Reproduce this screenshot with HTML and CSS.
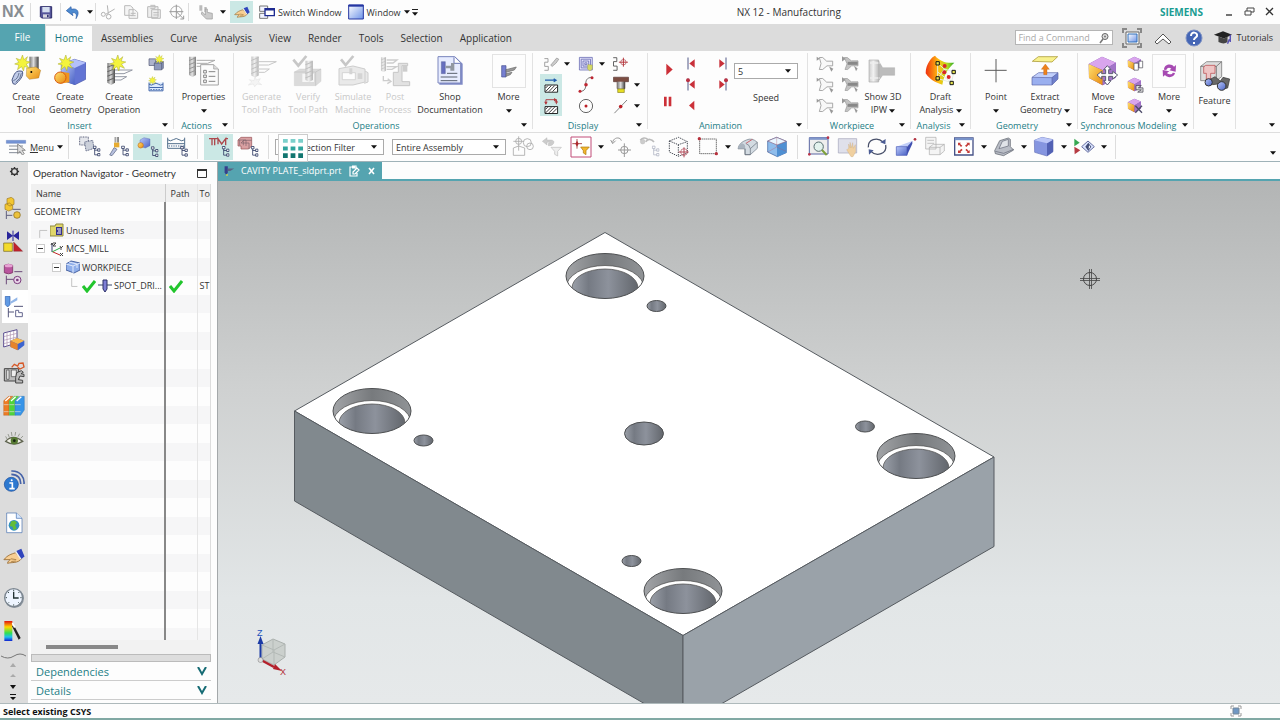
FILE: index.html
```html
<!DOCTYPE html>
<html lang="en">
<head>
<meta charset="utf-8">
<meta name="viewport" content="width=device-width, initial-scale=1">
<title>NX 12 - Manufacturing</title>
<link rel="stylesheet" href="styles.css">
</head>
<body>
<svg class="sprite" aria-hidden="true">
  <defs>
    <linearGradient id="gSteel"><stop offset="0" stop-color="#777"/><stop offset=".45" stop-color="#ddd"/><stop offset="1" stop-color="#444"/></linearGradient>
    <linearGradient id="gBlue" x2="1" y2="1"><stop offset="0" stop-color="#b9c8fb"/><stop offset="1" stop-color="#4a62c4"/></linearGradient>
    <linearGradient id="gGold" x2="1" y2="1"><stop offset="0" stop-color="#ffe070"/><stop offset="1" stop-color="#e88a10"/></linearGradient>
    <linearGradient id="gSky" x2="1" y2="1"><stop offset="0" stop-color="#fff"/><stop offset="1" stop-color="#6d93e8"/></linearGradient>
    <linearGradient id="gHeat" x2="1" y2="0"><stop offset="0" stop-color="#f03010"/><stop offset=".45" stop-color="#ffc010"/><stop offset=".75" stop-color="#b5dc20"/><stop offset="1" stop-color="#28a828"/></linearGradient>
    <linearGradient id="gSpectrum" x2="0" y2="1"><stop offset="0" stop-color="#e01010"/><stop offset=".3" stop-color="#ffd800"/><stop offset=".6" stop-color="#30e050"/><stop offset=".8" stop-color="#20c0f0"/><stop offset="1" stop-color="#1020d0"/></linearGradient>
    <linearGradient id="gHole"><stop offset="0" stop-color="#9ba0a9"/><stop offset=".25" stop-color="#757a83"/><stop offset=".55" stop-color="#8d929c"/><stop offset="1" stop-color="#62666c"/></linearGradient>
    <linearGradient id="gRim"><stop offset="0" stop-color="#a2a4a7"/><stop offset=".5" stop-color="#777a7d"/><stop offset="1" stop-color="#909396"/></linearGradient>
    <clipPath id="holeClip"><ellipse rx="39" ry="22.5"/></clipPath>
  </defs>
  <symbol id="star" viewBox="0 0 48 48"><path d="M24 0l4 14 11-9-5 13 14 3-13 6 9 13-14-6-3 14-6-13-12 9 4-14-13-3 13-5-8-12 13 5z" fill="#f4f43c" stroke="#a8aa30" stroke-width="1.5"/></symbol>
  <symbol id="drill" viewBox="0 0 24 66"><path d="M1 2h22v57l-11 6-11-6z" fill="url(#gSteel)"/><path d="M1 14l22-9M1 27l22-9M1 40l22-9M1 53l22-9" stroke="#666" stroke-width="3"/></symbol>
  <symbol id="caret" viewBox="0 0 7 4"><path d="M0 0h7L3.500 4z" fill="#111"/></symbol>
  <symbol id="tree" viewBox="0 0 24 33"><g fill="#fff" stroke="#333f66" stroke-width="2.500"><path d="M6 8v20h12M6 14h12" fill="none"/><path d="M2 2h8v7H2zM15 10h7v7h-7zM15 24h7v7h-7z"/></g></symbol>

  <symbol id="i-tool" viewBox="0 0 96 96"><path d="M58 5h28v48H58z" fill="url(#gSteel)"/><path d="M50 39l28-3 14 10-6 23-28 4-9-10z" fill="url(#gGold)" stroke="#92600c"/><circle cx="64" cy="51" r="3"/><path d="M6 75c7-18 10-31 31-26 5 13-8 28-21 39l-7-2z" fill="#c0cbe9" stroke="#4c5a86" stroke-width="3"/><path d="M10 77q14-5 17-23M17 82q16-11 17-27" fill="none" stroke="#697895" stroke-width="3"/><use href="#star" x="13" y="0" width="49" height="48"/></symbol>
  <symbol id="i-geom" viewBox="0 0 96 96"><path d="M22 28l39-15 35 10-1 50-32 16-41-14z" fill="#6274d4" stroke="#4552a8" stroke-width="2"/><path d="M22 28l40 11 34-16-35-10z" fill="#b3c0fa"/><path d="M22 28l40 11v50l-40-14z" fill="url(#gBlue)"/><path d="M20 50l26 4v28l-28 4z" fill="#ef951e"/><circle cx="19" cy="68" r="17" fill="url(#gGold)" stroke="#d85c14" stroke-width="3"/><use href="#star" x="11" y="0" width="49" height="48"/></symbol>
  <symbol id="i-oper" viewBox="0 0 96 96"><path d="M34 45h54l-25 11H36M34 65h37l-17 10H34" fill="none" stroke="#9498a4" stroke-width="3"/><use href="#drill" x="12" y="22" width="25" height="69"/><use href="#star" x="20" y="0" width="49" height="48"/></symbol>
  <symbol id="i-smallgeom" viewBox="0 0 60 60"><path d="M9 16h20v20H9z" fill="#aeb4cc" stroke="#4e5674" stroke-width="2"/><path d="M25 29l5-5h22v20l-5 5H25z" fill="#8e99bc" stroke="#4e5674" stroke-width="2"/><path d="M25 29h22v20M47 29l5-5" fill="none" stroke="#4e5674" stroke-width="2"/><use href="#star" x="26" y="3" width="28" height="28"/></symbol>
  <symbol id="i-method" viewBox="0 0 60 60"><path d="M9 24v25h42V24M9 29q7 6 14 0t14 0 14 0M10 39h41" fill="#dceafc" stroke="#4468ac" stroke-width="3"/><path d="M13 45h36" stroke="#6482ba" stroke-width="3" stroke-dasharray="5 3"/><use href="#star" x="7" y="5" width="25" height="25"/></symbol>
  <symbol id="i-props" viewBox="0 0 96 96"><use href="#drill" x="2" y="2" width="23" height="66" opacity=".7"/><path d="M26 16h55l-22 9H26M26 34h28l-12 7" fill="none" stroke="#aaa" stroke-width="3"/><path d="M38 29h39l14 13v48H38z" fill="#fbfbfb" stroke="#a3a3a3" stroke-width="3"/><path d="M77 29v13h14" fill="#ddd" stroke="#999" stroke-width="2"/><path d="M47 46h8v8h-8zM47 60h8v8h-8zM47 75h8v8h-8zM62 50h20M62 64h20M62 79h20" fill="none" stroke="#868686" stroke-width="3"/></symbol>
  <symbol id="i-generate" viewBox="0 0 96 96"><use href="#drill" x="15" y="2" width="24" height="67"/><path d="M39 20h52L68 30H39M39 42h31L56 52H39" fill="none" stroke="#777" stroke-width="3"/><path d="M27 63l4 12 12-4-6 10 10 8-14-2-7 8-4-8-15 3 10-9-7-7 14 3z" fill="#e8e8e8" stroke="#999"/></symbol>
  <symbol id="i-verify" viewBox="0 0 96 96"><path d="M7 51l16-9h64v37L71 92H7z" fill="#aaa" stroke="#777"/><path d="M7 51h64v41M71 51l16-9" fill="none" stroke="#666" stroke-width="2"/><path d="M31 56h35v25H31z" fill="#eee"/><use href="#drill" x="39" y="15" width="25" height="67"/><path d="M4 14l15 18L43 3" fill="none" stroke="#777" stroke-width="8"/></symbol>
  <symbol id="i-simulate" viewBox="0 0 96 96"><path d="M6 41l42-8 36 9v39l-36 9H6zM84 48l9 5v28l-11 4" fill="#ccc" stroke="#888" stroke-width="3"/><path d="M16 53h39v21H16z" fill="#fff" stroke="#777" stroke-width="2"/><path d="M37 40v18h9V40M62 55h14v17H62z" fill="#999"/><path d="M12 13l14 17L49 3" fill="none" stroke="#777" stroke-width="8"/></symbol>
  <symbol id="i-post" viewBox="0 0 96 96"><use href="#drill" x="5" y="2" width="17" height="53"/><path d="M23 15h31l-12 9H23M23 35h30l-14 8H23M13 63v14h18M26 71l10 8-11 7" fill="none" stroke="#888" stroke-width="4"/><path d="M43 52h15V25h28v7H69v48h23v12H43z" fill="#bbb" stroke="#777" stroke-width="3"/><path d="M71 32h14v18H71z" fill="#888"/></symbol>
  <symbol id="i-doc" viewBox="0 0 96 96"><path d="M16 5h48l22 21v63H16z" fill="#7f8ac6"/><path d="M12 5h50l18 18v61H12z" fill="#e7ecff" stroke="#7c86bd" stroke-width="3"/><path d="M60 7v18h19" fill="#fff" stroke="#6c77b3" stroke-width="3"/><path d="M22 20h12v36H22z" fill="#666ebf" stroke="#3e477d"/><path d="M35 32h16v-8h10v23H49v-7H35" fill="#9298a1"/><path d="M39 55h31M20 66h50M20 77h50" stroke="#59616e" stroke-width="3"/></symbol>
  <symbol id="i-moreop" viewBox="0 0 96 96"><path d="M26 32h13v34H26z" fill="#767fd1" stroke="#46508f" stroke-width="2"/><path d="M39 44l31-8-6 9-25 7zM39 56l18-4-5 7-13 5z" fill="#999" stroke="#666" stroke-width="2"/></symbol>
  <symbol id="i-show3d" viewBox="0 0 96 96"><path d="M6 15h29v66H6z" fill="url(#gSteel)" opacity=".35"/><path d="M35 18l12 20h36v23H47L35 77z" fill="#bcbcbc" stroke="#999"/><path d="M9 24h29M9 69h29" stroke="#eee" stroke-width="4"/><path d="M6 15h29v66H6z" fill="none" stroke="#b0b0b0" stroke-width="2"/></symbol>
  <symbol id="i-draft" viewBox="0 0 96 96"><path d="M2 55C2 27 21 5 30 2c14 16 34 24 58 21-15 15-29 28-36 66C31 82 14 74 2 55z" fill="url(#gHeat)"/><path d="M38 25l20 17 29 9-8 31-41-11zM38 71L58 42 79 82 38 51" fill="none" stroke="#e7eedf" stroke-width="3"/><path d="M33 20h10v10H33zM33 65h10v10H33zM81 46h10v10H81zM75 79h10v10H75z" fill="#e9e650" stroke="#171717" stroke-width="3"/><g fill="#d8262b"><circle cx="59" cy="33" r="6"/><circle cx="58" cy="52" r="6"/><circle cx="71" cy="66" r="6"/></g></symbol>
  <symbol id="i-point" viewBox="0 0 96 96"><path d="M48 12v70M14 46h66" stroke="#5c5c5c" stroke-width="3"/></symbol>
  <symbol id="i-extract" viewBox="0 0 96 96"><path d="M10 19l18-14h58L69 21z" fill="#f8f18d" stroke="#9e8b19" stroke-width="2"/><path d="M9 67l20-14h58L69 68z" fill="#c1cffb"/><path d="M9 67h60v23H9z" fill="#9aafef"/><path d="M69 67l18-14v19L69 90z" fill="#6f80cc"/><path d="M9 67l20-14h58L69 68zM69 68v22M9 67v23h60l18-18V53" fill="none" stroke="#5a65a7" stroke-width="2"/><path d="M44 59V43h-7l12-16 12 16h-7v16z" fill="#ee821b" stroke="#b65d14"/></symbol>
  <symbol id="i-cube" viewBox="0 0 96 96"><path d="M5 27L45 5l42 18-1 45-39 23L6 69z" fill="#7b4ca9"/><path d="M5 27L45 5l42 18-39 23z" fill="#d9a5ed"/><path d="M5 27l42 19v45L6 69z" fill="url(#gGold)"/><path d="M48 46l39-23-1 45-39 23z" fill="#a274c8"/></symbol>
  <symbol id="i-move" viewBox="0 0 96 96"><use href="#i-cube" width="96" height="96"/><path d="M61 32l11 12h-7v12h12v-7l15 11-15 12v-8H65v13h7L61 90 50 77h6V64H44v8L30 60l14-11v7h12V44h-6z" fill="#fff" stroke="#5b5b72" stroke-width="3"/></symbol>
  <symbol id="i-syncmore" viewBox="0 0 96 96"><path d="M33 44c0-16 22-20 30-9l6-5-1 20-19-4 6-5c-7-6-14-2-15 4M66 54c-2 13-21 17-30 6l-6 5-1-20 20 4-7 5c8 7 16 4 17-1" fill="#a64ab2"/></symbol>
  <symbol id="i-feature" viewBox="0 0 96 96"><path d="M5 22L23 8h45v45L52 65H5z" fill="#ddd" stroke="#666" stroke-width="2"/><path d="M5 22h47v43M52 22L68 8" fill="none" stroke="#555" stroke-width="2"/><path d="M14 24l6-5h28v24H35v18H22V43h-8z" fill="#eec4c4" stroke="#b83f43" stroke-width="2"/><path d="M26 65l22-12 16 13 8-11 20 5-6 27-18 5-11-17-16 2z" fill="#686868" stroke="#333" stroke-width="2"/><circle cx="29" cy="70" r="11" fill="url(#gBlue)" stroke="#333" stroke-width="3"/><circle cx="68" cy="81" r="13" fill="url(#gBlue)" stroke="#333" stroke-width="3"/></symbol>

  <symbol id="d-path" viewBox="0 0 60 60"><path d="M8 12h12v12H9v14h12v13H8" fill="none" stroke="#999" stroke-width="3"/><path d="M29 34l10-12 10-12 7 4-9 13-13 11z" fill="#ccc" stroke="#888" stroke-width="2"/></symbol>
  <symbol id="d-boundary" viewBox="0 0 60 60"><path d="M8 8h43v42H8z" fill="#e1e0fa"/><path d="M8 8h43v42H8zM14 14h31v29H14zM20 20h19v17H20zM26 26h7v6h-7z" fill="none" stroke="#6266ae" stroke-width="2.500"/><path d="M36 32l15 1v14l-8 6-8-6z" fill="#d5da65" stroke="#878936"/></symbol>
  <symbol id="d-target" viewBox="0 0 60 60"><path d="M4 9h12v13H5v15h12v14H4" fill="none" stroke="#555" stroke-width="3"/><circle cx="38" cy="24" r="9" fill="none" stroke="#a02c35" stroke-width="2"/><path d="M38 9v30M23 24h30" stroke="#b22930" stroke-width="3"/></symbol>
  <symbol id="d-hatch1" viewBox="0 0 60 60"><path d="M10 14h36M39 9l8 5-8 5" fill="none" stroke="#205bad" stroke-width="4"/><path d="M10 30h42v24H10z" fill="#fff" stroke="#111" stroke-width="3"/><path d="M12 52l19-20M23 52l19-20M35 52l15-16M12 40l8-8" stroke="#222" stroke-width="3"/></symbol>
  <symbol id="d-hatch2" viewBox="0 0 60 60"><path d="M13 24V9h35v15" fill="none" stroke="#ab3036" stroke-width="3"/><path d="M40 3l10 6-10 6M7 16h12l-6 10M42 18h12l-6-9" fill="#b3383d"/><path d="M10 32h42v23H10z" fill="#fff" stroke="#111" stroke-width="3"/><path d="M12 53l19-19M23 53l19-19M35 53l15-15M12 41l7-7" stroke="#222" stroke-width="3"/></symbol>
  <symbol id="d-curve" viewBox="0 0 60 60"><path d="M8 52c41-3 1-45 43-48" fill="none" stroke="#666" stroke-width="3"/><g fill="#be2732"><circle cx="10" cy="51" r="5"/><circle cx="30" cy="29" r="6"/><circle cx="50" cy="6" r="5"/></g></symbol>
  <symbol id="d-holder" viewBox="0 0 60 60"><path d="M5 4h50v15H43v23H17V19H5z" fill="#7c4d42" stroke="#522f2b" stroke-width="2"/><path d="M17 19h26v24H17z" fill="url(#gSteel)"/><path d="M19 43h22v12H19z" fill="#e6de22" stroke="#7e7717" stroke-width="2"/></symbol>
  <symbol id="d-circle" viewBox="0 0 60 60"><circle cx="30" cy="30" r="22" fill="none" stroke="#555" stroke-width="3"/><circle cx="30" cy="30" r="5" fill="#bb2027"/></symbol>
  <symbol id="d-line" viewBox="0 0 60 60"><path d="M8 54L50 10" stroke="#777" stroke-width="3"/><circle cx="29" cy="32" r="6" fill="#bb2027"/></symbol>
  <symbol id="a-play" viewBox="0 0 60 60"><path d="M22 13l19 17-19 17z" fill="#cc3038"/></symbol>
  <symbol id="a-pause" viewBox="0 0 60 60"><path d="M15 16h8v28h-8zM29 16h8v28h-8z" fill="#cc3038"/></symbol>
  <symbol id="a-back" viewBox="0 0 60 60"><path d="M37 16v28L21 30z" fill="#cc3038"/></symbol>
  <symbol id="a-first" viewBox="0 0 60 60"><path d="M38 17v26L22 30z" fill="#c8303a"/><path d="M18 12v36" stroke="#515887" stroke-width="3"/></symbol>
  <symbol id="a-firstdot" viewBox="0 0 60 60"><use href="#a-first" width="60" height="60"/><circle cx="18" cy="17" r="6" fill="#b93244"/></symbol>
  <symbol id="w-part" viewBox="0 0 60 60"><path d="M5 10l9 6-9 6z" fill="#999"/><path d="M13 12h10l12 11h18v14H36L23 48H13l5-18z" fill="#f8f8f8" stroke="#999" stroke-width="2.500"/><path d="M42 39l13 7-6 9z" fill="#999"/></symbol>
  <symbol id="w-solid" viewBox="0 0 60 60"><path d="M6 8l12 8-12 8z" fill="#999"/><path d="M13 12h9l12 10h20v15H35L23 48h-8l6-17z" fill="#c3c3c3" stroke="#999" stroke-width="2"/><path d="M23 25h30v9H23z" fill="#888"/><path d="M42 37l11 8-5 8z" fill="#999"/></symbol>
  <symbol id="s-copy" viewBox="0 0 60 60"><use href="#i-cube" x="6" y="6" width="46" height="48"/><path d="M27 29h13v21H27zM42 23h11v20H42z" fill="#fff" stroke="#494951" stroke-width="2"/></symbol>
  <symbol id="s-size" viewBox="0 0 60 60"><use href="#i-cube" x="6" y="6" width="46" height="48"/><path d="M33 33h16l-9 7h14v13H38l11-7H33z" fill="#ddd" stroke="#3b3b47" stroke-width="2"/></symbol>
  <symbol id="s-delete" viewBox="0 0 60 60"><use href="#i-cube" x="6" y="6" width="46" height="48"/><path d="M31 31l20 21M51 31L31 52" stroke="#4d4b69" stroke-width="4"/></symbol>

  <symbol id="q-save" viewBox="0 0 48 48"><path d="M7 8h34v34H11l-4-4z" fill="#55559a" stroke="#2e2d6a" stroke-width="3"/><path d="M13 9h22v16H13z" fill="#d5deef"/><path d="M15 31h19v10H15z" fill="#d7d7df"/><path d="M27 32h5v8h-5z" fill="#313174"/></symbol>
  <symbol id="q-undo" viewBox="0 0 48 48"><path d="M4 20L18 8l1 8c17-5 28 7 14 28 4-16-3-20-12-17l3 8z" fill="#4d8ad0" stroke="#2557a4" stroke-width="2"/></symbol>
  <symbol id="q-cut" viewBox="0 0 48 48"><g fill="none" stroke="#b3b3b3" stroke-width="3"><path d="M22 4l3 25M44 15L17 31"/><circle cx="10" cy="31" r="6"/><circle cx="26" cy="38" r="7"/></g></symbol>
  <symbol id="q-copy" viewBox="0 0 48 48"><g fill="#f5f5f5" stroke="#bbb" stroke-width="3"><path d="M5 5h17l8 7v22H5zM18 17h17l9 8v18H18z"/><path d="M23 28h15M23 35h15"/></g></symbol>
  <symbol id="q-paste" viewBox="0 0 48 48"><path d="M5 8h31v32H5zM17 17h26v26H17z" fill="#eee" stroke="#bbb" stroke-width="3"/><path d="M13 4h14v9H13M22 26h16M22 33h16" fill="none" stroke="#bbb" stroke-width="3"/></symbol>
  <symbol id="q-orient" viewBox="0 0 48 48"><circle cx="22" cy="23" r="17" fill="none" stroke="#aaa" stroke-width="3"/><path d="M22 2v43M1 23h42M22 23l22 22M44 35v10H34" fill="none" stroke="#999" stroke-width="3"/></symbol>
  <symbol id="q-touch" viewBox="0 0 48 48"><path d="M4 4h9v16H4zM19 9h7v15h-7z" fill="#bbb"/><path d="M12 23l10 10V15h6v10l15 3v17H25L10 30z" fill="#ccc" stroke="#999" stroke-width="2"/></symbol>
  <symbol id="q-hand" viewBox="0 0 48 48"><path d="M2 32c8-10 16-12 25-15l14 12c-8 12-22 8-31 11 0-4 3-6 6-8z" fill="#f8ce93" stroke="#9b713a" stroke-width="2"/><path d="M17 30l12 2M18 36l10-1" stroke="#a97f45" stroke-width="2"/><path d="M29 13l11-5 7 17-8 6z" fill="#3145bd"/><path d="M28 15l11 16" stroke="#eee" stroke-width="3"/></symbol>
  <symbol id="q-switch" viewBox="0 0 48 48"><path d="M2 6h24v16H2zM2 28h24v15H2z" fill="#f1f3ff" stroke="#777" stroke-width="3"/><path d="M18 14h28v21H18z" fill="#fff" stroke="#1e2b91" stroke-width="4"/><path d="M18 17h28" stroke="#1e2b91" stroke-width="5"/></symbol>
  <symbol id="q-window" viewBox="0 0 48 48"><path d="M2 3h44v42H2z" fill="url(#gSky)" stroke="#2536a2" stroke-width="3"/><path d="M2 5h44" stroke="#2536a2" stroke-width="6"/></symbol>

  <symbol id="t-menu" viewBox="0 0 66 48"><path d="M4 4h58v9H4z" fill="#7494d5" stroke="#4866aa"/><path d="M12 21h42M12 31h42M12 41h42" stroke="#858d98" stroke-width="3"/><path d="M38 15v29l7-7 7 11 6-4-7-10h10z" fill="#ddd" stroke="#666" stroke-width="2"/></symbol>
  <symbol id="t-program" viewBox="0 0 66 66"><path d="M2 3h26v24H2z" fill="#e4e6eb" stroke="#5b607b" stroke-width="3" stroke-dasharray="3 2"/><path d="M17 18l24-5 4 24-24 8z" fill="#cbd0da" stroke="#606986" stroke-width="3" stroke-dasharray="3 2"/><use href="#tree" x="41" y="28" width="24" height="34"/></symbol>
  <symbol id="t-toolview" viewBox="0 0 66 66"><path d="M20 3h12v17H20z" fill="url(#gSteel)"/><path d="M18 20h16v14H18z" fill="#e7ac31"/><path d="M5 57L18 35l9 5L12 59z" fill="#b6bfdd" stroke="#56617e" stroke-width="2"/><use href="#tree" x="39" y="28" width="24" height="34"/></symbol>
  <symbol id="t-geomview" viewBox="0 0 66 66"><path d="M9 12l12-7 18 4v20l-14 7-16-5z" fill="url(#gBlue)" stroke="#4d57a4"/><circle cx="11" cy="28" r="8" fill="url(#gGold)" stroke="#c47220" stroke-width="2"/><use href="#tree" x="41" y="30" width="24" height="34"/></symbol>
  <symbol id="t-methodview" viewBox="0 0 66 66"><path d="M5 5v32h51V5M5 11q8 7 17 0t17 0 17 0M5 23h51" fill="none" stroke="#53708d" stroke-width="3"/><path d="M8 30h46" stroke="#849bb5" stroke-width="5" stroke-dasharray="4 3"/><use href="#tree" x="42" y="29" width="24" height="34"/></symbol>
  <symbol id="t-wave" viewBox="0 0 66 66"><path d="M3 8h9v20M20 28V8h-8M30 25V8l11 16L53 8v20M60 8h-7M20 8h10" fill="none" stroke="#ad484d" stroke-width="4"/><use href="#tree" x="41" y="29" width="24" height="34"/></symbol>
  <symbol id="t-layers" viewBox="0 0 66 66"><path d="M3 12l9-8h32v26l-9 9H12v-9H3z" fill="#d9a0a2" stroke="#954e53" stroke-width="2"/><path d="M3 12h24v18M12 21h24v18M12 21l8-8h24M8 12v16M19 12v16" fill="none" stroke="#7d6169" stroke-width="2"/><use href="#tree" x="41" y="29" width="24" height="34"/></symbol>
  <symbol id="t-snap" viewBox="0 0 66 66"><g fill="none" stroke="#aaa" stroke-width="2.500"><path d="M4 16h32M20 1v43M4 36l16-6 18 6v22H4z"/><circle cx="20" cy="16" r="9"/><circle cx="46" cy="20" r="12"/><circle cx="54" cy="31" r="10"/></g></symbol>
  <symbol id="t-filterback" viewBox="0 0 66 66"><path d="M4 16L18 5v7h12c14 0 10 17-4 17h-4v-7h4v-3h-8v8z" fill="#ccc" stroke="#aaa"/><path d="M30 34h31L50 46v14l-9-5v-9z" fill="#eee" stroke="#bbb" stroke-width="2"/></symbol>
  <symbol id="t-filter" viewBox="0 0 66 66"><path d="M3 3h60v60H3z" fill="#fff" stroke="#c14d79" stroke-width="3"/><path d="M21 9v29M7 23h29" stroke="#aa5252" stroke-width="3"/><path d="M21 14l5 9-5 9-5-9z" fill="#ae272d"/><path d="M32 33h26L48 44v12l-8-5v-7z" fill="#f2b72c" stroke="#aa7510" stroke-width="2"/></symbol>
  <symbol id="t-rotate" viewBox="0 0 66 66"><path d="M8 20C9 4 31 1 34 14M2 12l6 11 9-9M43 22v41M24 42h39" fill="none" stroke="#999" stroke-width="3"/><circle cx="43" cy="42" r="11" fill="none" stroke="#999" stroke-width="3"/></symbol>
  <symbol id="t-chain" viewBox="0 0 66 66"><path d="M4 13C10 4 20 4 27 11M20 17c8-10 18-8 25 1" fill="none" stroke="#bbb" stroke-width="5"/><circle cx="11" cy="17" r="7" fill="#ccc" stroke="#aaa"/><use href="#tree" x="38" y="27" width="24" height="36" opacity=".35"/></symbol>
  <symbol id="t-wirecube" viewBox="0 0 66 66"><path d="M4 15L32 4l26 13v34L31 61 4 48zM4 15l27 11 27-9M31 26v35" fill="none" stroke="#424750" stroke-width="3" stroke-dasharray="4 3"/><path d="M48 34v30M32 48h30" stroke="#b14754" stroke-width="3"/><circle cx="48" cy="48" r="10" fill="none" stroke="#b14754" stroke-width="2"/></symbol>
  <symbol id="t-rect" viewBox="0 0 66 66"><path d="M8 9h50v44H8z" fill="none" stroke="#333" stroke-width="3" stroke-dasharray="3 3"/><circle cx="7" cy="8" r="5" fill="#b7303b"/><circle cx="58" cy="53" r="5" fill="#b7303b"/></symbol>
  <symbol id="t-face" viewBox="0 0 66 66"><path d="M3 38Q6 20 28 12q17-8 33 7v18L40 56H24V38z" fill="#d3dbe2" stroke="#697583" stroke-width="2"/><path d="M3 38h21v18h16V38q-2-12-14-16M40 38l21-19" fill="none" stroke="#626b77" stroke-width="2"/><path d="M3 38q3-13 12-16 12 3 9 16z" fill="#aab4bf"/><path d="M27 22L46 10" stroke="#ce6670" stroke-width="3"/></symbol>
  <symbol id="t-body" viewBox="0 0 66 66"><path d="M5 15L32 4l29 12v34L34 62 5 48z" fill="#8fbdec" stroke="#385e9c" stroke-width="2"/><path d="M33 27v35l28-12V16z" fill="#4f90d3"/><path d="M5 15L32 4l29 12-28 11z" fill="#e9f6ff" stroke="#8a6484" stroke-width="2"/><path d="M32 4v29l28 13M32 33L5 48" fill="none" stroke="#af5264"/></symbol>
  <symbol id="t-zoom" viewBox="0 0 66 66"><path d="M4 5h56v49H4z" fill="#eee" stroke="#5a66a2" stroke-width="3"/><path d="M4 8h56" stroke="#8097cb" stroke-width="7"/><circle cx="32" cy="32" r="14" fill="#e3f2ed" stroke="#566d70" stroke-width="3"/><path d="M42 42l14 15" stroke="#7da03a" stroke-width="6"/><circle cx="60" cy="5" r="4" fill="#b93449"/><circle cx="4" cy="55" r="4" fill="#b93449"/></symbol>
  <symbol id="t-pan" viewBox="0 0 66 66"><path d="M4 8h55v43H4z" fill="#dfe0eb" stroke="#a3a4b9" stroke-width="2"/><path d="M29 41l6-3V24l5 12-1-17 5 16 3-15 2 17 6-11 1 21-8 15H42z" fill="#f0d0a0" stroke="#c8a878"/></symbol>
  <symbol id="t-refresh" viewBox="0 0 66 66"><path d="M7 34C5 11 33 1 51 18M59 27c5 26-27 37-44 19" fill="none" stroke="#48506a" stroke-width="4"/><path d="M43 19l15 6 1-16M23 43L8 40l1 16z" fill="#4b5c94"/></symbol>
  <symbol id="t-persp" viewBox="0 0 66 66"><path d="M4 32L52 15 36 32z" fill="#c0cdf8"/><path d="M36 32L52 15v8L36 58z" fill="#3f4fb0"/><path d="M4 32h32v26H4z" fill="url(#gBlue)" stroke="#4656b4" stroke-width="2"/><circle cx="60" cy="10" r="4" fill="#b23341"/></symbol>
  <symbol id="t-drawing" viewBox="0 0 66 66"><path d="M5 4h31v35H5zM16 34l12-9h33v20L48 56H16z" fill="#f4f4f4" stroke="#aaa" stroke-width="2"/><path d="M10 13h20M10 22h20M16 34h32v22M48 34l13-9" fill="none" stroke="#aaa" stroke-width="2"/></symbol>
  <symbol id="t-fit" viewBox="0 0 66 66"><path d="M5 6h55v51H5z" fill="#fff" stroke="#465187" stroke-width="4"/><path d="M5 9h55" stroke="#7892c9" stroke-width="7"/><path d="M15 20h9l-3 3 7 6-4 4-6-7-3 3zM50 20v9l-3-3-7 7-4-4 7-6-3-3zM15 51v-9l3 3 7-7 4 4-7 6 3 3zM50 51h-9l3-3-7-6 4-4 6 7 3-3z" fill="#c53b37"/></symbol>
  <symbol id="t-clip" viewBox="0 0 66 66"><path d="M5 44L20 14l26-8 6 4v22l10 10-30 17-25-6z" fill="#b9bdc6" stroke="#555a64" stroke-width="2"/><path d="M18 38l10-22 18-6v20z" fill="#e0e3e8" stroke="#626776" stroke-width="2"/><path d="M7 46l25 6 30-12" fill="none" stroke="#626776" stroke-width="2"/></symbol>
  <symbol id="t-shade" viewBox="0 0 66 66"><path d="M4 13l23-9 33 7v36L42 60 5 49z" fill="#8595e0" stroke="#6672b8" stroke-width="2"/><path d="M42 22l18-11v36L42 60z" fill="#5261b4"/><path d="M4 13l38 9 18-11L27 4z" fill="#bcc7f8"/></symbol>
  <symbol id="t-view" viewBox="0 0 66 66"><path d="M4 8l16 12L4 31z" fill="#37a852"/><path d="M4 32l18 11L5 55z" fill="#b63b43"/><path d="M26 32l19-17 19 17-19 17z" fill="#dbe4ff" stroke="#646c9f" stroke-width="3"/><path d="M46 20l9 12-9 13-9-13z" fill="#404b75"/><path d="M48 27l4 6-5 7z" fill="#fff"/></symbol>

  <symbol id="r-assembly" viewBox="0 0 66 66"><path d="M12 5l13-4 8 6v15l-12 5-9-5zM6 22l13-4 10 7v12l-12 5-11-5z" fill="#f2c632" stroke="#9c792b" stroke-width="2"/><path d="M10 42v24M10 55h18M29 37h24" stroke="#5f607e" stroke-width="3"/><circle cx="42" cy="54" r="10" fill="#ecc23c" stroke="#80641a" stroke-width="2"/></symbol>
  <symbol id="r-constraint" viewBox="0 0 66 66"><path d="M12 4l18 13-18 13zM48 4L30 17l18 13z" fill="#29259b"/><path d="M30 2v31" stroke="#29259b" stroke-width="3"/><path d="M2 39h26v25H2z" fill="#f3db2d" stroke="#736523" stroke-width="2"/><path d="M32 36v28h27z" fill="#c1222c" stroke="#6b1b20"/></symbol>
  <symbol id="r-part" viewBox="0 0 66 66"><path d="M4 7q12-7 25 0v22q-12 7-25 0z" fill="#b9549d" stroke="#6c2556" stroke-width="2"/><ellipse cx="17" cy="8" rx="12" ry="5" fill="#e7a3d4"/><path d="M10 38v26M10 49h22M34 26h24" stroke="#6b4a79" stroke-width="3"/><circle cx="43" cy="51" r="11" fill="#ead6ea" stroke="#7a3c7c" stroke-width="3"/><circle cx="43" cy="51" r="4" fill="#7a3c7c"/></symbol>
  <symbol id="r-operation" viewBox="0 0 66 66"><path d="M4 1h14v25l-7 7-7-7z" fill="#609ae4" stroke="#315fae" stroke-width="2"/><path d="M19 17L40 4v9L19 24z" fill="#92b6e8"/><path d="M13 36v28M13 48h17M30 31h27" stroke="#53557a" stroke-width="3"/><path d="M35 43h9v7h11v12H35z" fill="#fff" stroke="#666890" stroke-width="3"/></symbol>
  <symbol id="r-machine" viewBox="0 0 66 66"><path d="M2 12L42 2v40L2 54z" fill="#fff" stroke="#5b4e91" stroke-width="3"/><path d="M2 23l40-10M2 34l40-10M2 44l40-10M12 10v41M22 7v41M32 5v41" stroke="#ac91ae" stroke-width="2"/><path d="M22 35l20-8 22 8v14L45 64 22 53z" fill="#3c64cf"/><path d="M22 35l20-8 22 8-20 10z" fill="#f8b84c"/><path d="M22 35l22 10v19L22 54z" fill="#e6842a"/></symbol>
  <symbol id="r-robot" viewBox="0 0 66 66"><path d="M4 20h43v37H4z" fill="#bbb" stroke="#444" stroke-width="3"/><path d="M11 24h7v28h-7zM25 24h15v20H25z" fill="#eee" stroke="#444" stroke-width="2"/><path d="M26 16l8-9 10 5 4-8 12-1 3 12-12 6-7-5" fill="none" stroke="#d75827" stroke-width="4"/><path d="M41 32l14-6 6 5-7 4 9 2v7l-12-2-5 11 13 2v8H38V46z" fill="#bbb" stroke="#444" stroke-width="3"/></symbol>
  <symbol id="r-books" viewBox="0 0 66 66"><path d="M2 17L17 4h13L18 18v43H2z" fill="#ec7c25" stroke="#a6551e"/><path d="M19 17L34 4h13L35 18v43H19z" fill="#4fd43c" stroke="#2f9835"/><path d="M36 17L51 4h13v41L53 61H36z" fill="#3694e8" stroke="#22639f"/><path d="M7 18L21 5M24 18L38 5M41 18L55 5" stroke="#fff" stroke-width="4"/><path d="M2 29h15M19 29h15M36 29h17M2 50h15M19 50h15M36 50h17" stroke="#ddd" stroke-width="2"/></symbol>
  <symbol id="r-eye" viewBox="0 0 66 66"><path d="M8 40Q29 16 59 40 33 56 8 40z" fill="#f0f0e6" stroke="#5f6450" stroke-width="4"/><circle cx="34" cy="38" r="11" fill="#567933"/><circle cx="34" cy="38" r="4" fill="#182413"/><path d="M12 33L8 25M19 28l-4-10M27 24l-2-12M36 23l2-11M45 26l5-9M53 31l7-7" stroke="#777c6e" stroke-width="2"/></symbol>
  <symbol id="r-info" viewBox="0 0 66 66"><circle cx="25" cy="43" r="21" fill="#2d79d0" stroke="#174898" stroke-width="2"/><path d="M19 39h9v17M19 56h16" fill="none" stroke="#fff" stroke-width="5"/><circle cx="26" cy="31" r="3" fill="#fff"/><path d="M25 13c20 0 29 13 28 29M25 3c28-1 40 20 38 39" fill="none" stroke="#4562a8" stroke-width="5"/></symbol>
  <symbol id="r-web" viewBox="0 0 66 66"><path d="M11 3h29l17 16v43H11z" fill="#fff" stroke="#426ead" stroke-width="2"/><path d="M40 3v16h17" fill="#d4e6ff" stroke="#426ead" stroke-width="2"/><circle cx="33" cy="40" r="16" fill="#338fc2"/><path d="M25 28l11-2 6 7-6 5 5 12-10 5-2-11-9-2z" fill="#62bd38"/></symbol>
  <symbol id="r-clock" viewBox="0 0 66 66"><circle cx="34" cy="34" r="29" fill="#8a949e"/><circle cx="32" cy="32" r="27" fill="#eef5ff" stroke="#7c8690" stroke-width="4"/><path d="M32 14v19h15" fill="none" stroke="#233" stroke-width="4"/><path d="M32 8v4M32 52v4M8 32h4M52 32h4M15 15l3 3M49 15l-3 3M15 49l3-3M49 49l-3-3" stroke="#455" stroke-width="3"/></symbol>
  <symbol id="r-color" viewBox="0 0 66 66"><path d="M4 3h24v60H4z" fill="url(#gSpectrum)"/><path d="M32 14l21 40-6 5-20-40z" fill="#222"/><path d="M26 10l7 14 5-3-8-13z" fill="#fff"/></symbol>
</svg>

<header class="titlebar">
  <div class="quick">
    <strong class="logo">NX</strong>
    <i class="sep"></i>
    <button class="q q-wide" aria-label="Save"><svg><use href="#q-save"/></svg></button>
    <i class="sep"></i>
    <button class="q" aria-label="Undo"><svg><use href="#q-undo"/></svg></button>
    <button class="drop" aria-label="Undo list"><svg class="caret"><use href="#caret"/></svg></button>
    <i class="sep"></i>
    <button class="q" aria-label="Cut"><svg><use href="#q-cut"/></svg></button>
    <button class="q" aria-label="Copy"><svg><use href="#q-copy"/></svg></button>
    <button class="q" aria-label="Paste"><svg><use href="#q-paste"/></svg></button>
    <button class="q" aria-label="Orient"><svg><use href="#q-orient"/></svg></button>
    <i class="sep"></i>
    <button class="q q-gap" aria-label="Repeat command"><svg><use href="#q-touch"/></svg></button>
    <button class="drop" aria-label="Repeat list"><svg class="caret"><use href="#caret"/></svg></button>
    <button class="q on" aria-label="Touch mode"><svg><use href="#q-hand"/></svg></button>
    <button class="q-text"><svg><use href="#q-switch"/></svg>Switch Window</button>
    <button class="q-text"><svg><use href="#q-window"/></svg>Window <svg class="caret"><use href="#caret"/></svg></button>
    <button class="overflow" aria-label="Toolbar options"><svg class="caret"><use href="#caret"/></svg></button>
  </div>
  <h1>NX 12 - Manufacturing</h1>
  <div class="window-controls">
    <strong class="brand">SIEMENS</strong>
    <button aria-label="Minimize"><svg viewBox="0 0 12 12"><path d="M3 9h6" stroke="#444" stroke-width="1.500"/></svg></button>
    <button aria-label="Restore"><svg viewBox="0 0 12 12"><path d="M2 5h6v4H2zM4 5V2h7v4H8" fill="none" stroke="#444"/></svg></button>
    <button aria-label="Close"><svg viewBox="0 0 12 12"><path d="M3 2l7 7M10 2L3 9" stroke="#333" stroke-width="1.300"/></svg></button>
  </div>
</header>

<nav class="tabs">
  <button class="file">File</button>
  <button class="current">Home</button>
  <button>Assemblies</button><button>Curve</button><button>Analysis</button><button>View</button><button>Render</button><button>Tools</button><button>Selection</button><button>Application</button>
  <div class="tab-tools">
    <label class="finder"><input type="text" placeholder="Find a Command" aria-label="Find a Command"><svg viewBox="0 0 12 12"><circle cx="7" cy="4.500" r="3" fill="#ddd" stroke="#666"/><circle cx="7" cy="4.500" r="1" fill="#777"/><path d="M5 7l-3 4" stroke="#777" stroke-width="1.500"/></svg></label>
    <button aria-label="Full screen"><svg viewBox="0 0 24 24"><path d="M3 7V3h4M17 3h4v4M21 17v4h-4M7 21H3v-4" fill="none" stroke="#888" stroke-width="2"/><path d="M6 6h13v12H6z" fill="#fff" stroke="#666"/><path d="M8 8h9v8H8z" fill="url(#gSky)" stroke="#2e6eb8"/></svg></button>
    <button aria-label="Minimize ribbon"><svg viewBox="0 0 24 24"><path d="M4 16l8-8 8 8-2 2-6-5-6 5z" fill="#fff" stroke="#555" stroke-linejoin="round"/></svg></button>
    <button aria-label="Help"><svg viewBox="0 0 24 24"><circle cx="12" cy="12" r="8" fill="#4566b5" stroke="#8093c4"/><path d="M9 10c0-5 7-4 6 0-1 2-3 2-3 4M12 16v2" fill="none" stroke="#fff" stroke-width="2"/></svg></button>
    <button class="tutorials"><svg viewBox="0 0 22 16"><path d="M1 5l10-4 10 4-9 4z" fill="#222"/><path d="M6 7v6q6 3 10 0V7l-4 2z" fill="#444"/><path d="M19 5v8M18 10l-2 5" stroke="#534cb4" stroke-width="1.500"/></svg>Tutorials</button>
  </div>
</nav>

<section class="ribbon" aria-label="Home ribbon">
  <div class="group g-insert">
    <div class="tools">
      <button class="big"><svg><use href="#i-tool"/></svg>Create<br>Tool</button>
      <button class="big"><svg><use href="#i-geom"/></svg>Create<br>Geometry</button>
      <button class="big"><svg><use href="#i-oper"/></svg>Create<br>Operation</button>
      <div class="stack"><button aria-label="Create program"><svg><use href="#i-smallgeom"/></svg></button><button aria-label="Create method"><svg><use href="#i-method"/></svg></button></div>
    </div>
    <div class="group-name"><span>Insert</span><button aria-label="Insert options"><svg class="caret"><use href="#caret"/></svg></button></div>
  </div>
  <div class="group g-actions">
    <div class="tools"><button class="big"><svg><use href="#i-props"/></svg>Properties<br><svg class="caret"><use href="#caret"/></svg></button></div>
    <div class="group-name"><span>Actions</span><button aria-label="Actions options"><svg class="caret"><use href="#caret"/></svg></button></div>
  </div>
  <div class="group g-operations">
    <div class="tools">
      <button class="big" disabled><svg><use href="#i-generate"/></svg>Generate<br>Tool Path</button>
      <button class="big" disabled><svg><use href="#i-verify"/></svg>Verify<br>Tool Path</button>
      <button class="big" disabled><svg><use href="#i-simulate"/></svg>Simulate<br>Machine</button>
      <button class="big" disabled><svg><use href="#i-post"/></svg>Post<br>Process</button>
      <button class="big"><svg><use href="#i-doc"/></svg>Shop<br>Documentation</button>
      <button class="big framed"><svg><use href="#i-moreop"/></svg>More<br><svg class="caret"><use href="#caret"/></svg></button>
    </div>
    <div class="group-name"><span>Operations</span><button aria-label="Operations options"><svg class="caret"><use href="#caret"/></svg></button></div>
  </div>
  <div class="group g-display">
    <div class="tools">
      <div class="cell"><button aria-label="Path display"><svg><use href="#d-path"/></svg></button><svg class="caret"><use href="#caret"/></svg></div>
      <div class="cell"><button aria-label="Boundaries"><svg><use href="#d-boundary"/></svg></button><svg class="caret"><use href="#caret"/></svg></div>
      <div class="cell"><button aria-label="Points"><svg><use href="#d-target"/></svg></button></div>
      <div class="cell"><button class="on" aria-label="Feeds"><svg><use href="#d-hatch1"/></svg></button></div>
      <div class="cell"><button aria-label="Curve"><svg><use href="#d-curve"/></svg></button></div>
      <div class="cell"><button aria-label="Tool display"><svg><use href="#d-holder"/></svg></button><svg class="caret"><use href="#caret"/></svg></div>
      <div class="cell"><button class="on" aria-label="Non cutting moves"><svg><use href="#d-hatch2"/></svg></button></div>
      <div class="cell"><button aria-label="Arcs"><svg><use href="#d-circle"/></svg></button></div>
      <div class="cell"><button aria-label="Lines"><svg><use href="#d-line"/></svg></button><svg class="caret"><use href="#caret"/></svg></div>
    </div>
    <div class="group-name"><span>Display</span><button aria-label="Display options"><svg class="caret"><use href="#caret"/></svg></button></div>
  </div>
  <div class="group g-animation">
    <div class="tools">
      <div class="stack two"><button aria-label="Play"><svg><use href="#a-play"/></svg></button><button aria-label="Pause"><svg><use href="#a-pause"/></svg></button></div>
      <div class="stack"><button aria-label="First"><svg><use href="#a-first"/></svg></button><button aria-label="Previous operation"><svg><use href="#a-firstdot"/></svg></button><button aria-label="Step back"><svg><use href="#a-back"/></svg></button></div>
      <div class="stack next"><button aria-label="Last"><svg class="flip"><use href="#a-first"/></svg></button><button aria-label="Next operation"><svg class="flip"><use href="#a-firstdot"/></svg></button></div>
      <div class="speed"><div class="combo"><select id="speed"><option>5</option></select><svg class="caret"><use href="#caret"/></svg></div><label for="speed">Speed</label></div>
    </div>
    <div class="group-name"><span>Animation</span><button aria-label="Animation options"><svg class="caret"><use href="#caret"/></svg></button></div>
  </div>
  <div class="group g-workpiece">
    <div class="tools">
      <div class="stack"><button aria-label="Part"><svg><use href="#w-part"/></svg></button><button aria-label="Blank"><svg><use href="#w-part"/></svg></button><button aria-label="Check"><svg><use href="#w-part"/></svg></button></div>
      <div class="stack"><button aria-label="Part solid"><svg><use href="#w-solid"/></svg></button><button aria-label="Blank solid"><svg><use href="#w-solid"/></svg></button><button aria-label="Check solid"><svg><use href="#w-solid"/></svg></button></div>
      <button class="big"><svg><use href="#i-show3d"/></svg>Show 3D<br>IPW <svg class="caret"><use href="#caret"/></svg></button>
    </div>
    <div class="group-name"><span>Workpiece</span><button aria-label="Workpiece options"><svg class="caret"><use href="#caret"/></svg></button></div>
  </div>
  <div class="group g-analysis">
    <div class="tools"><button class="big"><svg><use href="#i-draft"/></svg>Draft<br>Analysis <svg class="caret"><use href="#caret"/></svg></button></div>
    <div class="group-name"><span>Analysis</span><button aria-label="Analysis options"><svg class="caret"><use href="#caret"/></svg></button></div>
  </div>
  <div class="group g-geometry">
    <div class="tools">
      <button class="big"><svg><use href="#i-point"/></svg>Point<br><svg class="caret"><use href="#caret"/></svg></button>
      <button class="big"><svg><use href="#i-extract"/></svg>Extract<br>Geometry <svg class="caret"><use href="#caret"/></svg></button>
    </div>
    <div class="group-name"><span>Geometry</span><button aria-label="Geometry options"><svg class="caret"><use href="#caret"/></svg></button></div>
  </div>
  <div class="group g-sync">
    <div class="tools">
      <button class="big"><svg><use href="#i-move"/></svg>Move<br>Face</button>
      <div class="stack"><button aria-label="Copy face"><svg><use href="#s-copy"/></svg></button><button aria-label="Resize face"><svg><use href="#s-size"/></svg></button><button aria-label="Delete face"><svg><use href="#s-delete"/></svg></button></div>
      <button class="big framed"><svg><use href="#i-syncmore"/></svg>More<br><svg class="caret"><use href="#caret"/></svg></button>
    </div>
    <div class="group-name"><span>Synchronous Modeling</span><button aria-label="Synchronous Modeling options"><svg class="caret"><use href="#caret"/></svg></button></div>
  </div>
  <div class="group g-feature">
    <div class="tools"><button class="big"><svg><use href="#i-feature"/></svg>Feature<br><svg class="caret"><use href="#caret"/></svg></button></div>
  </div>
  <div class="group g-rest"><div class="tools"></div><div class="group-name"><span></span><button aria-label="Ribbon options"><svg class="caret"><use href="#caret"/></svg></button></div></div>
</section>

<section class="toolbar" aria-label="Selection toolbar">
  <button class="menu"><svg><use href="#t-menu"/></svg><span><u>M</u>enu</span><svg class="caret"><use href="#caret"/></svg></button>
  <i class="sep"></i>
  <button aria-label="Program order view"><svg><use href="#t-program"/></svg></button>
  <button aria-label="Machine tool view"><svg><use href="#t-toolview"/></svg></button>
  <button class="on" aria-label="Geometry view"><svg><use href="#t-geomview"/></svg></button>
  <button aria-label="Method view"><svg><use href="#t-methodview"/></svg></button>
  <i class="sep"></i>
  <button class="on" aria-label="Show path"><svg><use href="#t-wave"/></svg></button>
  <button aria-label="Feature groups"><svg><use href="#t-layers"/></svg></button>
  <i class="sep"></i>
  <div class="combo filter">
    <select aria-label="Type filter"><option>No Selection Filter</option></select><svg class="caret"><use href="#caret"/></svg>
    <button class="grip" aria-label="Touch panel"><svg viewBox="0 0 23 22"><path d="M1 1h5v4H1zM9 1h5v4H9zM17 1h5v4h-5z" fill="#7cd0cb"/><path d="M1 9h5v4H1zM9 9h5v4H9zM17 9h5v4h-5z" fill="#30a49d"/><path d="M1 16h5v5H1zM9 16h5v5H9zM17 16h5v5h-5z" fill="#127670"/></svg></button>
  </div>
  <div class="combo scope"><select aria-label="Selection scope"><option>Entire Assembly</option></select><svg class="caret"><use href="#caret"/></svg></div>
  <button aria-label="Snap"><svg><use href="#t-snap"/></svg></button>
  <button aria-label="Reset filters"><svg><use href="#t-filterback"/></svg></button>
  <button aria-label="General selection filters"><svg><use href="#t-filter"/></svg></button>
  <button class="drop" aria-label="Filter list"><svg class="caret"><use href="#caret"/></svg></button>
  <button aria-label="Rotation point"><svg><use href="#t-rotate"/></svg></button>
  <button aria-label="Chain"><svg><use href="#t-chain"/></svg></button>
  <button aria-label="Highlight hidden edges"><svg><use href="#t-wirecube"/></svg></button>
  <button aria-label="Rectangle select"><svg><use href="#t-rect"/></svg></button>
  <button class="drop" aria-label="Rectangle list"><svg class="caret"><use href="#caret"/></svg></button>
  <button aria-label="Face rule"><svg><use href="#t-face"/></svg></button>
  <button aria-label="Body rule"><svg><use href="#t-body"/></svg></button>
  <i class="sep"></i>
  <button aria-label="Zoom"><svg><use href="#t-zoom"/></svg></button>
  <button aria-label="Pan"><svg><use href="#t-pan"/></svg></button>
  <button aria-label="Rotate"><svg><use href="#t-refresh"/></svg></button>
  <button aria-label="Perspective"><svg><use href="#t-persp"/></svg></button>
  <button aria-label="Drawing"><svg><use href="#t-drawing"/></svg></button>
  <button aria-label="Fit"><svg><use href="#t-fit"/></svg></button>
  <button class="drop" aria-label="Fit list"><svg class="caret"><use href="#caret"/></svg></button>
  <button aria-label="Clip section"><svg><use href="#t-clip"/></svg></button>
  <button class="drop" aria-label="Clip list"><svg class="caret"><use href="#caret"/></svg></button>
  <button aria-label="Shaded"><svg><use href="#t-shade"/></svg></button>
  <button class="drop" aria-label="Style list"><svg class="caret"><use href="#caret"/></svg></button>
  <button aria-label="Show and hide"><svg><use href="#t-view"/></svg></button>
  <button class="drop" aria-label="Show list"><svg class="caret"><use href="#caret"/></svg></button>
  <i class="sep"></i>
  <button class="drop last" aria-label="Toolbar options"><svg class="caret"><use href="#caret"/></svg></button>
</section>

<main class="workspace">
  <nav class="rail" aria-label="Resource bar">
    <button class="gear" aria-label="Settings"><svg viewBox="0 0 12 12"><circle cx="6" cy="6" r="3.200" fill="none" stroke="#333" stroke-width="1.500"/><path d="M6 1v2M6 9v2M1 6h2M9 6h2M2.500 2.500l1 1M9.500 2.500l-1 1M2.500 9.500l1-1M9.500 9.500l-1-1" stroke="#333" stroke-width="1.500"/></svg></button>
    <button aria-label="Assembly Navigator"><svg><use href="#r-assembly"/></svg></button>
    <button aria-label="Constraint Navigator"><svg><use href="#r-constraint"/></svg></button>
    <button aria-label="Part Navigator"><svg><use href="#r-part"/></svg></button>
    <button class="current" aria-label="Operation Navigator"><svg><use href="#r-operation"/></svg></button>
    <button aria-label="Machine Tool Navigator"><svg><use href="#r-machine"/></svg></button>
    <button aria-label="Process Assistant"><svg><use href="#r-robot"/></svg></button>
    <button aria-label="Reuse Library"><svg><use href="#r-books"/></svg></button>
    <button aria-label="View"><svg><use href="#r-eye"/></svg></button>
    <button class="spaced" aria-label="HD3D Tools"><svg><use href="#r-info"/></svg></button>
    <button class="spaced" aria-label="Web Browser"><svg><use href="#r-web"/></svg></button>
    <button aria-label="Touch Panel"><svg><use href="#q-hand"/></svg></button>
    <button class="spaced" aria-label="History"><svg><use href="#r-clock"/></svg></button>
    <button aria-label="Visual Reports"><svg><use href="#r-color"/></svg></button>
    <svg class="rail-end" viewBox="0 0 27 54"><path d="M1 9q7 4 13 0t12 0" fill="none" stroke="#777"/><path d="M10 20l3-4 3 4z M10 30l3-3 3 3z" fill="#aaa"/><path d="M10 38h6l-3 4zM10 50h6l-3 3zM10 47h6v1h-6z" fill="#111"/></svg>
  </nav>

  <aside class="navigator">
    <header><h2>Operation Navigator - Geometry</h2><button aria-label="Undock"><svg viewBox="0 0 12 12"><path d="M1.500 2.500h9v8h-9z" fill="none" stroke="#333"/><path d="M1 3h10" stroke="#333" stroke-width="2"/></svg></button></header>
    <div class="grid-wrap">
      <table>
        <colgroup><col class="c-name"><col class="c-path"><col></colgroup>
        <thead><tr><th>Name</th><th>Path</th><th>To</th></tr></thead>
        <tbody>
          <tr><td>GEOMETRY</td><td></td><td></td></tr>
          <tr><td><div class="node"><svg class="branch" viewBox="0 0 16 18"><path d="M6.500 18V9.500H15" fill="none" stroke="#bbb"/></svg><svg class="pic" viewBox="0 0 14 14"><path d="M0 3h5l1-2h7v12H0z" fill="#e0d66a" stroke="#8d8740"/><path d="M6 4h6v8H6z" fill="#34308c"/><path d="M7 6h4M8 8h3M7 10h4" stroke="#fff"/></svg>Unused Items</div></td><td></td><td></td></tr>
          <tr><td><div class="node"><button class="toggle" aria-label="Collapse MCS_MILL"></button><svg class="pic" viewBox="0 0 14 14"><path d="M2 1v9" stroke="#333a6a"/><path d="M2 10l8-4" stroke="#28a845"/><path d="M3 10l7 3" stroke="#c02828"/><path d="M3 1h3L3 4h3M10 4l1 2 2-2M11 6v2M10 11l3 3M13 11l-3 3M1 3l1-2 1 2" fill="none" stroke="#444"/></svg>MCS_MILL</div></td><td></td><td></td></tr>
          <tr><td><div class="node deep"><button class="toggle" aria-label="Collapse WORKPIECE"></button><svg class="pic" viewBox="0 0 14 14"><path d="M0 4l5-3 9 2v7l-6 3-8-3z" fill="#8faeea" stroke="#4a64a2"/><path d="M0 4l7 2 7-3M7 6v7M3 2l8 2v4" fill="none" stroke="#dfe8fa"/></svg>WORKPIECE</div></td><td></td><td></td></tr>
          <tr><td><div class="node deepest"><svg class="branch" viewBox="0 0 16 18"><path d="M6.500 0v9.500H13" fill="none" stroke="#bbb"/></svg><svg class="pic" viewBox="0 0 14 14"><path d="M1 7l4 5 8-10" fill="none" stroke="#22c52d" stroke-width="3"/></svg><svg class="pic" viewBox="0 0 14 14"><path d="M0 6h14" stroke="#39466c"/><path d="M5 1h4v9l-2 3-2-3z" fill="#7f7fd6" stroke="#2c3168"/></svg><span>SPOT_DRI...</span></div></td><td><svg class="pic" viewBox="0 0 14 14"><path d="M1 7l4 5 8-10" fill="none" stroke="#22c52d" stroke-width="3"/></svg></td><td>ST</td></tr>
          <tr><td></td><td></td><td></td></tr><tr><td></td><td></td><td></td></tr><tr><td></td><td></td><td></td></tr><tr><td></td><td></td><td></td></tr><tr><td></td><td></td><td></td></tr><tr><td></td><td></td><td></td></tr><tr><td></td><td></td><td></td></tr><tr><td></td><td></td><td></td></tr><tr><td></td><td></td><td></td></tr><tr><td></td><td></td><td></td></tr><tr><td></td><td></td><td></td></tr><tr><td></td><td></td><td></td></tr><tr><td></td><td></td><td></td></tr><tr><td></td><td></td><td></td></tr><tr><td></td><td></td><td></td></tr><tr><td></td><td></td><td></td></tr><tr><td></td><td></td><td></td></tr><tr><td></td><td></td><td></td></tr><tr><td></td><td></td><td></td></tr>
        </tbody>
      </table>
    </div>
    <div class="scroll"><i></i></div>
    <div class="splitter"></div>
    <button class="section">Dependencies<svg viewBox="0 0 10 9"><path d="M1 0l4 7 4-7" fill="none" stroke="#176c75" stroke-width="2"/></svg></button>
    <button class="section">Details<svg viewBox="0 0 10 9"><path d="M1 0l4 7 4-7" fill="none" stroke="#176c75" stroke-width="2"/></svg></button>
  </aside>

  <section class="document">
    <div class="doc-tabs"><div class="doc-tab"><svg viewBox="0 0 15 12"><path d="M2 0h4v8l-2 3-2-3z" fill="#37408c"/><path d="M6 3h8l-5 3H6" fill="#5a6282"/><path d="M4 10h2v2H4z" fill="#eadb44"/></svg><span>CAVITY PLATE_sldprt.prt</span><svg class="modified" viewBox="0 0 12 12"><path d="M7 2H2v9h7V8M4 1h4v2H4M5 7l4-4 2 2-4 4H5z" fill="none" stroke="#fff" stroke-width="1.200"/></svg><button aria-label="Close part"><svg viewBox="0 0 8 8"><path d="M1 1l5 6M6 1L1 7" stroke="#fff" stroke-width="1.600"/></svg></button></div></div>
    <svg class="scene" viewBox="218 181 1062 522" preserveAspectRatio="xMidYMin slice" role="img" aria-label="Cavity plate model">
      <symbol id="bore" viewBox="-40 -24 80 48"><g><ellipse rx="39" ry="22.500" fill="url(#gRim)"/><g clip-path="url(#holeClip)"><ellipse cy="12" rx="39" ry="22.500" fill="#fff" stroke="#555" stroke-width=".8"/><ellipse cy="12" rx="33" ry="19" fill="url(#gHole)" stroke="#555" stroke-width=".8"/></g><ellipse rx="39" ry="22.500" fill="none" stroke="#4d4f51"/></g></symbol>
      <g stroke="#565b60" stroke-linejoin="round">
        <path d="M605 232.500L994 457 683 635.500 294.500 411z" fill="#fff"/>
        <path d="M294.500 411L683 635.500V726L294.500 501z" fill="#81898e"/>
        <path d="M994 457L683 635.500V726l311-179.500z" fill="#9aa2a9"/>
      </g>
      <use href="#bore" x="565" y="252" width="80" height="48"/><use href="#bore" x="332" y="387" width="80" height="48"/><use href="#bore" x="876" y="432" width="80" height="48"/><use href="#bore" x="643" y="567" width="80" height="48"/>
      <g fill="url(#gHole)" stroke="#4d4f51"><ellipse cx="644" cy="433.500" rx="19.500" ry="11.500"/><ellipse cx="656.500" cy="306" rx="9.500" ry="5.500"/><ellipse cx="423.500" cy="440.500" rx="9.500" ry="5.500"/><ellipse cx="865" cy="426.500" rx="9.500" ry="5.500"/><ellipse cx="631.500" cy="561" rx="9.500" ry="5.500"/></g>
      <g fill="none" stroke="#454545"><circle cx="1090" cy="279" r="6.500"/><path d="M1080 278.500h20M1080 280.500h20M1089.500 269v20M1091.500 269v20" stroke-width=".8"/></g>
      <path d="M262 645l11-6 12 5v13l-11 8-12-6z" fill="#cbd0cd" stroke="#aab0ad"/><path d="M262 645l12 5 11-6M274 650v15M273 639v13l12 5M273 652l-11 7" fill="none" stroke="#b3b9b6"/>
      <path d="M260.500 659V642" stroke="#1b3aa5" stroke-width="2"/><path d="M257.500 644l3-8 3 8z" fill="#1b3aa5"/>
      <path d="M261 660l13 7" stroke="#b3202b" stroke-width="2.500"/><path d="M273 669l2-5 7 7z" fill="#b3202b"/><circle cx="260.500" cy="660" r="2.500" fill="#ddd" stroke="#888" stroke-width=".6"/>
      <text class="axis-z" x="257" y="636">Z</text><text class="axis-x" x="280" y="675">X</text>
    </svg>
  </section>
</main>
<footer class="status"><span>Select existing CSYS</span><svg viewBox="0 0 12 12"><path d="M1 4V1h3M8 1h3v3M11 8v3H8M4 11H1V8" fill="none" stroke="#999"/><path d="M3 3h6v6H3z" fill="#6f97c3" stroke="#789"/></svg></footer>
</body>
</html>
```
FILE: styles.css
```css
* { box-sizing: border-box; }
body {
  margin: 0;
  height: 100vh;
  display: flex;
  flex-direction: column;
  overflow: hidden;
  background: #fdfdfd;
  color: #333;
  font: 9px/13px "Open Sans", "Noto Sans", sans-serif;
}
button, select, input {
  font: inherit;
  color: inherit;
  margin: 0;
  padding: 0;
  border: 0;
  background: none;
}
svg { display: block; flex: none; }
h1, h2 { margin: 0; font: inherit; }
.sprite { position: absolute; width: 0; height: 0; }
.caret { width: 6px; height: 4px; }
.sep { flex: none; width: 1px; height: 18px; background: #ddd; }
.on { background: #cbe8e5; }

/* Title bar */
.titlebar {
  display: grid;
  grid-template-columns: auto 1fr auto;
  align-items: center;
  height: 24px;
  flex: none;
  font-size: 10px;
}
.titlebar h1 { text-align: center; }
.quick { display: flex; align-items: center; }
.logo { width: 30px; padding-left: 2px; color: #878d92; font: bold 16px/24px "Liberation Sans", sans-serif; }
.q { display: flex; align-items: center; justify-content: center; width: 23px; height: 22px; }
.q svg, .q-text > svg:first-child { width: 16px; height: 16px; }
.q-wide { width: 29px; }
.q-gap { margin-left: 5px; }
.drop { display: flex; align-items: center; justify-content: center; width: 11px; }
.q-text { display: flex; align-items: center; gap: 3px; margin-left: 6px; font-size: 9px; }
.quick .on { margin-left: 2px; }
.overflow { margin-left: 2px; padding-top: 2px; border-top: 1px solid #222; }
.window-controls { display: flex; align-items: center; gap: 8px; padding-right: 5px; }
.window-controls svg { width: 12px; height: 12px; }
.brand { margin-right: 12px; color: #1a9c92; font-size: 10px; }

/* Tab row */
.tabs { display: flex; height: 27px; flex: none; background: #dcdcdc; font-size: 10px; }
.tabs > button { padding: 2px 8px 0 9px; }
.tabs > .file { width: 45px; padding: 0; background: #55a4b0; color: #fff; }
.tabs > .current { width: 46px; margin: 2px 0 0 1px; padding: 0; background: #fdfdfd; color: #167480; }
.tab-tools { display: flex; align-items: center; gap: 7px; margin-left: auto; padding-right: 7px; }
.tab-tools svg { width: 24px; height: 24px; }
.finder { display: flex; align-items: center; width: 98px; height: 15px; border: 1px solid #b5b5b5; background: #fff; }
.finder input { width: 82px; padding-left: 2px; outline: 0; font-size: 9px; }
.finder input::placeholder { color: #aaa; opacity: 1; }
.finder svg { width: 12px; height: 12px; }
.tab-tools .tutorials { display: flex; align-items: center; gap: 3px; font-size: 9px; }
.tutorials svg { width: 20px; height: 15px; }

/* Ribbon */
.ribbon { display: flex; flex: none; height: 82px; padding-top: 2px; border-bottom: 1px solid #dedede; }
.group { display: flex; flex-direction: column; flex: none; margin-bottom: 3px; border-right: 1px solid #e2e2e2; }
.tools { display: grid; height: 65px; flex: none; }
.big { display: flow-root; align-self: start; text-align: center; white-space: nowrap; }
.big > svg:first-child { width: 32px; height: 32px; margin: 2px auto 3px; }
.big .caret { display: inline-block; vertical-align: middle; }
.big:disabled { color: #c8c8c8; }
.big:disabled svg { opacity: .4; }
.framed > svg:first-child { outline: 1px solid #e3e3e3; }
.group-name { display: grid; grid-template-columns: 1fr 14px; align-items: center; height: 14px; flex: none; color: #247e86; text-align: center; white-space: nowrap; }
.group-name button { display: flex; justify-content: center; padding-right: 2px; }
.stack { display: flex; flex-direction: column; align-items: center; }
.stack svg { width: 20px; height: 21px; }
.stack.two { justify-content: space-around; }
.g-insert { width: 174px; }
.g-insert .tools { grid-template-columns: 44px 44px 54px 20px; padding-left: 4px; }
.g-actions { width: 60px; }
.g-operations { width: 299px; }
.g-operations .tools { grid-template-columns: 47px 46px 44px 40px 70px 47px; padding-left: 4px; }
.g-display { width: 115px; }
.g-display .tools { grid-template-columns: 35px 35px 35px; grid-template-rows: 21px 21px 21px; padding-left: 7px; }
.cell { display: flex; align-items: center; gap: 2px; }
.cell button { display: flex; justify-content: center; align-items: center; width: 22px; height: 21px; }
.cell button svg { width: 18px; height: 18px; }
.g-animation { width: 160px; }
.g-animation .tools { grid-template-columns: 32px 14px 35px 64px; padding-left: 5px; }
.g-animation .next { padding-left: 10px; }
.g-animation .flip { transform: scaleX(-1); }
.speed { display: flex; flex-direction: column; gap: 12px; padding-top: 10px; text-align: center; }
.g-workpiece { width: 103px; }
.g-workpiece .tools { grid-template-columns: 26px 24px 42px; padding-left: 4px; }
.g-analysis { width: 60px; }
.g-geometry { width: 107px; }
.g-geometry .tools { grid-template-columns: 48px 50px; padding-left: 1px; }
.g-sync { width: 116px; }
.g-sync .tools { grid-template-columns: 48px 16px 52px; padding-left: 1px; }
.g-feature { width: 42px; }
.g-feature .tools { padding-top: 4px; }
.g-rest { flex: 1; border-right: 0; }

.combo { position: relative; display: grid; align-items: center; height: 16px; border: 1px solid #aaa; background: #fff; }
.combo > select { grid-area: 1 / 1; height: 14px; width: 100%; padding-left: 3px; appearance: none; outline: 0; }
.combo > .caret { grid-area: 1 / 1; justify-self: end; margin-right: 6px; pointer-events: none; }

/* Selection toolbar */
.toolbar { display: flex; align-items: center; flex: none; height: 29px; border-bottom: 1px solid #9fb2b8; }
.toolbar > button { display: flex; align-items: center; justify-content: center; flex: none; width: 29px; height: 26px; }
.toolbar > button svg { width: 22px; height: 22px; }
.toolbar svg.caret { width: 6px; height: 4px; }
.toolbar > .drop { width: 11px; }
.toolbar > .last { margin-left: auto; margin-right: 2px; padding-top: 12px; }
.toolbar .sep { margin: 0 6px; height: 24px; }
.toolbar > .menu { width: 62px; gap: 3px; padding-left: 6px; }
.toolbar > .menu svg:first-child { width: 22px; height: 16px; }
.filter { width: 109px; margin-right: 8px; }
.scope { width: 114px; margin-right: 2px; }
.grip { position: absolute; left: 2px; top: -6px; width: 30px; height: 28px; padding: 3px; border: 1px solid #ccc; background: #fff; }
.grip svg { width: 22px; height: 21px; }

/* Workspace */
.workspace { display: flex; flex: 1; min-height: 0; }
.rail { display: flex; flex-direction: column; flex: none; width: 28px; overflow: hidden; background: #dcdcdc; }
.rail button { display: flex; align-items: center; justify-content: center; flex: none; height: 33px; }
.rail svg { width: 22px; height: 22px; }
.rail .gear { height: 29px; padding-bottom: 10px; }
.rail .gear svg { width: 11px; height: 11px; }
.rail .current { margin-left: 2px; background: #fff; }
.rail .spaced { margin-top: 9px; }
.rail .rail-end { width: 27px; height: 54px; }

.navigator { display: flex; flex-direction: column; flex: none; width: 190px; padding: 0 6px 3px 3px; border-right: 1px solid #a4a8aa; background: #fdfdfd; }
.navigator > header { display: flex; align-items: center; justify-content: space-between; flex: none; height: 22px; padding: 0 3px 0 2px; }
.navigator h2 { font: 10px/13px Lato, "Open Sans", sans-serif; }
.navigator > header svg { width: 12px; height: 12px; }
.grid-wrap { flex: 1; min-height: 0; overflow: hidden; border-right: 1px solid #ddd; }
table { width: 100%; table-layout: fixed; border-collapse: collapse; }
.c-name { width: 134px; }
.c-path { width: 32px; }
th, td { height: 18px; padding: 0 3px; font-weight: normal; text-align: left; white-space: nowrap; overflow: hidden; border-right: 1px solid #e5e5e5; }
th { background: #f0f0f0; padding-left: 5px; }
tbody tr:nth-child(odd) td { height: 19px; }
tbody tr:nth-child(even) { background: #f6f6f7; }
th:first-child { border-right: 1px solid #ccc; }
td:first-child { border-right: 2px solid #888; }
td:last-child, th:last-child { padding: 0 0 0 2px; border-right: 0; }
.node { display: flex; align-items: center; gap: 2px; height: 18px; }
.branch { width: 14px; height: 18px; }
.pic { width: 14px; height: 14px; }
.toggle { width: 9px; height: 9px; margin: 0 3px 0 2px; border: 1px solid #ccc; background: linear-gradient(#333, #333) center / 5px 1px no-repeat #fff; }
.deep { padding-left: 16px; }
.deepest { padding-left: 32px; }
.scroll { flex: none; height: 14px; padding: 5px 15px; background: #f2f2f2; }
.scroll i { display: block; width: 72px; height: 4px; background: #888; }
.splitter { flex: none; height: 8px; border: 1px solid #bbb; background: #ddd; }
.section { display: flex; align-items: center; justify-content: space-between; flex: none; height: 19px; padding: 0 4px 0 5px; border-bottom: 1px solid #ccc; color: #247e86; font-size: 11px; }
.section svg { width: 10px; height: 9px; }

.document { display: flex; flex-direction: column; flex: 1; min-width: 0; }
.doc-tabs { display: flex; flex: none; height: 19px; border-bottom: 2px solid #55a4b0; background: #fdfdfd; }
.doc-tab { display: flex; align-items: center; gap: 6px; padding: 0 6px 0 5px; background: #55a4b0; color: #fff; }
.doc-tab svg { width: 12px; height: 12px; }
.doc-tab button svg { width: 8px; height: 8px; margin-left: 2px; }
.scene { flex: 1; width: 100%; min-height: 0; background: linear-gradient(#b3b5b5, #cfd1d1 40%, #e2e6e7 80%, #e6e9ea); }
.axis-z, .axis-x { font: 9px "Liberation Sans", sans-serif; fill: #2451bd; }
.axis-x { fill: #b3323b; }

.status { display: flex; align-items: center; justify-content: space-between; flex: none; height: 17px; padding: 0 38px 0 3px; border-top: 1px solid #aeb9bb; border-bottom: 2px solid #80a8a3; color: #111; font-weight: bold; }
.status svg { width: 12px; height: 12px; }
```
